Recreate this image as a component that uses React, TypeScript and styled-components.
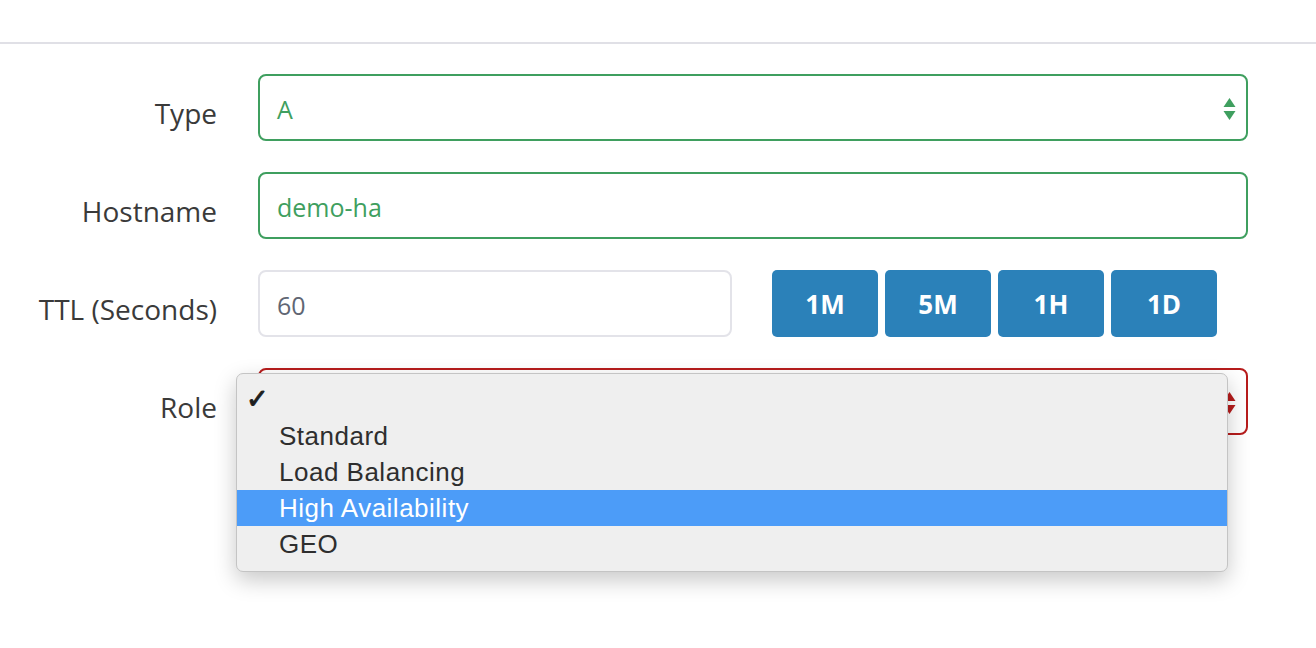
import * as React from 'react';
import styled, { createGlobalStyle } from 'styled-components';

const GlobalStyle = createGlobalStyle`
  html, body {
    margin: 0;
    padding: 0;
    background: #ffffff;
    font-family: 'Open Sans', 'Liberation Sans', sans-serif;
  }
`;

const GREEN = '#3f9f5f';
const RED = '#b71c1c';

const roles = ['', 'Standard', 'Load Balancing', 'High Availability', 'GEO'];

const Arrows = ({ color }: { color: string }) => (
  <Styled.Arrows width="13" height="24" viewBox="0 0 13 24">
    <polygon points="6.5,1 12.5,10 0.5,10" fill={color} />
    <polygon points="0.5,14 12.5,14 6.5,23" fill={color} />
  </Styled.Arrows>
);

const App = () => {
  const [ttl, setTtl] = React.useState('60');

  return (
    <Styled.Page>
      <GlobalStyle />
      <Styled.Divider />
      <Styled.Form>
        <Styled.Row>
          <Styled.Label>Type</Styled.Label>
          <Styled.Field tone={GREEN}>
            <Styled.Value color={GREEN}>A</Styled.Value>
            <Arrows color={GREEN} />
          </Styled.Field>
        </Styled.Row>
        <Styled.Row>
          <Styled.Label>Hostname</Styled.Label>
          <Styled.Field tone={GREEN}>
            <Styled.Value color={GREEN}>demo-ha</Styled.Value>
          </Styled.Field>
        </Styled.Row>
        <Styled.Row>
          <Styled.Label>TTL (Seconds)</Styled.Label>
          <Styled.TtlGroup>
            <Styled.Field tone="#e3e3e9" width="474px">
              <Styled.Value color="#606673">{ttl}</Styled.Value>
            </Styled.Field>
            <Styled.Buttons>
              {[
                ['1M', '60'],
                ['5M', '300'],
                ['1H', '3600'],
                ['1D', '86400'],
              ].map(([label, value]) => (
                <Styled.Button key={label} onClick={() => setTtl(value)}>
                  {label}
                </Styled.Button>
              ))}
            </Styled.Buttons>
          </Styled.TtlGroup>
        </Styled.Row>
        <Styled.Row>
          <Styled.Label>Role</Styled.Label>
          <Styled.Field tone={RED}>
            <Styled.Value color={RED}></Styled.Value>
            <Arrows color={RED} />
            <Styled.Menu>
              {roles.map((role, i) => (
                <Styled.MenuItem key={i} active={role === 'High Availability'}>
                  {i === 0 && <Styled.Check>✓</Styled.Check>}
                  {role}
                </Styled.MenuItem>
              ))}
            </Styled.Menu>
          </Styled.Field>
        </Styled.Row>
      </Styled.Form>
    </Styled.Page>
  );
};

const Styled = {
  Page: styled.div`
    width: 1316px;
    height: 648px;
    padding-top: 42px;
    box-sizing: border-box;
  `,
  Divider: styled.div`
    height: 2px;
    background: #e0e0e6;
  `,
  Form: styled.div`
    display: flex;
    flex-direction: column;
    gap: 31px;
    padding-top: 30px;
  `,
  Row: styled.div`
    display: grid;
    grid-template-columns: 217px 990px;
    column-gap: 41px;
    align-items: center;
    height: 67px;
  `,
  Label: styled.div`
    text-align: right;
    font-size: 28px;
    color: #3a3a3a;
    padding-top: 10px;
  `,
  Field: styled.div<{ tone: string; width?: string }>`
    position: relative;
    box-sizing: border-box;
    width: ${(p) => p.width || '100%'};
    height: 67px;
    border: 2px solid ${(p) => p.tone};
    border-radius: 8px;
    display: flex;
    align-items: center;
    justify-content: space-between;
    padding: 2px 8px 0 17px;
  `,
  Value: styled.span<{ color: string }>`
    font-size: 25px;
    color: ${(p) => p.color};
  `,
  Arrows: styled.svg`
    margin-right: 2px;
  `,
  TtlGroup: styled.div`
    display: flex;
    align-items: center;
    gap: 40px;
  `,
  Buttons: styled.div`
    display: flex;
    gap: 7px;
  `,
  Button: styled.button`
    width: 106px;
    height: 67px;
    border: none;
    border-radius: 5px;
    background: #2b81b9;
    color: #ffffff;
    font-family: 'Open Sans', sans-serif;
    font-weight: 700;
    font-size: 26px;
    cursor: pointer;
  `,
  Menu: styled.div`
    position: absolute;
    left: -24px;
    top: 3px;
    width: 992px;
    box-sizing: border-box;
    padding: 8px 0 9px;
    background: #efefef;
    border: 1px solid #c4c4c4;
    border-radius: 7px;
    box-shadow: 0 8px 22px rgba(0, 0, 0, 0.22);
    z-index: 2;
  `,
  MenuItem: styled.div<{ active: boolean }>`
    position: relative;
    height: 36px;
    line-height: 36px;
    padding-left: 42px;
    font-family: 'Liberation Sans', Arial, sans-serif;
    font-size: 26px;
    letter-spacing: 0.5px;
    color: ${(p) => (p.active ? '#ffffff' : '#2e2e2e')};
    background: ${(p) => (p.active ? '#4c9cf8' : 'transparent')};
  `,
  Check: styled.span`
    position: absolute;
    left: 9px;
    top: -1px;
    font-family: 'DejaVu Sans', sans-serif;
    font-size: 27px;
    font-weight: 700;
    color: #1e1e1e;
    -webkit-text-stroke: 1px #1e1e1e;
  `,
};

export default App;
